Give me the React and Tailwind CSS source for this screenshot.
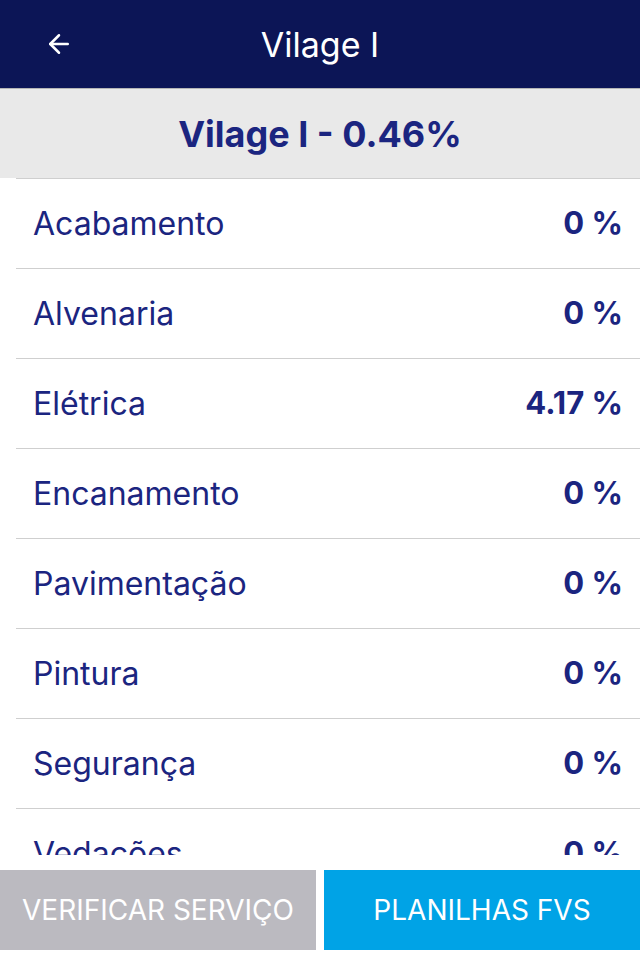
import { ArrowLeft } from "lucide-react";

const items = [
  { name: "Acabamento", value: "0 %" },
  { name: "Alvenaria", value: "0 %" },
  { name: "Elétrica", value: "4.17 %" },
  { name: "Encanamento", value: "0 %" },
  { name: "Pavimentação", value: "0 %" },
  { name: "Pintura", value: "0 %" },
  { name: "Segurança", value: "0 %" },
  { name: "Vedações", value: "0 %" },
];

const App = () => {
  return (
    <div className="w-[640px] h-[960px] bg-white flex flex-col overflow-hidden font-['Inter',sans-serif]">
      <header className="h-[88px] shrink-0 bg-[#0c1556] relative flex items-center justify-center">
        <button className="absolute left-[44px] top-[29px] text-white">
          <ArrowLeft size={30} strokeWidth={2} />
        </button>
        <h1 className="text-white text-[34px] font-normal">Vilage I</h1>
      </header>
      <div className="h-[90px] shrink-0 bg-[#e9e9e9] border-t border-[#b5b5b5] flex items-center justify-center">
        <h2 className="text-[#1b2580] text-[36px] font-bold">Vilage I - 0.46%</h2>
      </div>
      <ul className="flex-1 overflow-hidden">
        {items.map((item) => (
          <li key={item.name} className="ml-4 h-[90px] border-t border-[#cfcfcf] flex items-center justify-between pl-[17px] pr-[17px]">
            <span className="text-[#1b2580] text-[32px]">{item.name}</span>
            <span className="text-[#1b2580] text-[31px] font-bold">{item.value}</span>
          </li>
        ))}
      </ul>
      <div className="h-[105px] shrink-0 flex gap-2 pt-[15px] pb-[10px]">
        <button className="flex-1 bg-[#bbbac0] text-white text-[28px]">
          VERIFICAR SERVIÇO
        </button>
        <button className="flex-1 bg-[#00a3e6] text-white text-[28px]">
          PLANILHAS FVS
        </button>
      </div>
    </div>
  );
};

export default App;
